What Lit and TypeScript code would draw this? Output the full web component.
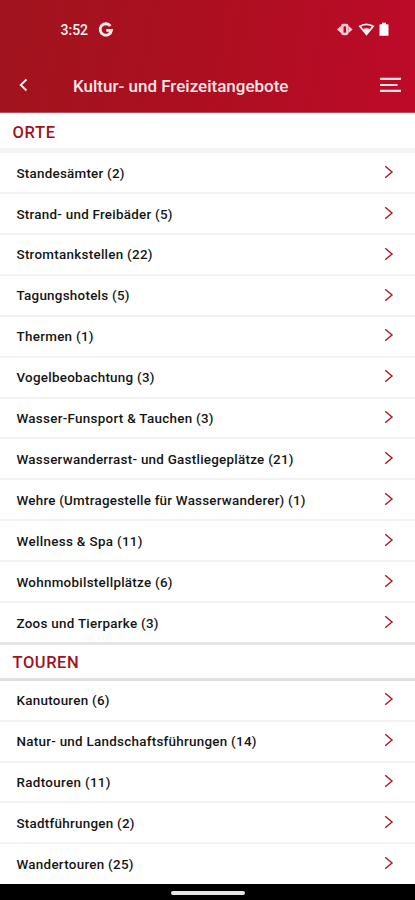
import { LitElement, html, css } from "lit";
import { customElement, property } from "lit/decorators.js";

interface Entry { name: string; count: number; width: number }

const places: Entry[] = [
  { name: "Standesämter", count: 2, width: 108 },
  { name: "Strand- und Freibäder", count: 5, width: 156 },
  { name: "Stromtankstellen", count: 22, width: 136 },
  { name: "Tagungshotels", count: 5, width: 113 },
  { name: "Thermen", count: 1, width: 77 },
  { name: "Vogelbeobachtung", count: 3, width: 138 },
  { name: "Wasser-Funsport & Tauchen", count: 3, width: 197 },
  { name: "Wasserwanderrast- und Gastliegeplätze", count: 21, width: 277 },
  { name: "Wehre (Umtragestelle für Wasserwanderer)", count: 1, width: 289 },
  { name: "Wellness & Spa", count: 11, width: 126 },
  { name: "Wohnmobilstellplätze", count: 6, width: 156 },
  { name: "Zoos und Tierparke", count: 3, width: 142 },
];
const tours: Entry[] = [
  { name: "Kanutouren", count: 6, width: 93 },
  { name: "Natur- und Landschaftsführungen", count: 14, width: 240 },
  { name: "Radtouren", count: 11, width: 94 },
  { name: "Stadtführungen", count: 2, width: 118 },
  { name: "Wandertouren", count: 25, width: 117 },
];

@customElement("list-row")
class ListRow extends LitElement {
  @property() label = "";
  @property({ type: Number }) textWidth = 0;
  static styles = css`
    :host { display: flex; flex: none; box-sizing: border-box; height: 40.9px; align-items: center; justify-content: space-between; padding: 0 21px 0 16px; border-bottom: 2px solid #f2f2f2; background: #fff; }
    :host([last]) { height: 39.4px; border-bottom: 0; }
    svg { display: block; }
    .arrow { margin-bottom: 1.6px; }
    .label { font: 500 13.4px/20px Roboto, sans-serif; fill: #151515; }
  `;
  render() {
    return html`<svg width="310" height="22"><text class="label" x="0.5" y="16.2" textLength=${this.textWidth}>${this.label}</text></svg>
      <svg class="arrow" width="10" height="14" viewBox="0 0 10 14"><path d="M1.2 1.2 8 7 1.2 12.8" fill="none" stroke="#a5202c" stroke-width="1.5"/></svg>`;
  }
}

@customElement("app-root")
class AppRoot extends LitElement {
  static styles = css`
    :host { display: flex; flex-direction: column; height: 900px; overflow: hidden; background: #fff; font-family: Roboto, sans-serif; }
    svg { display: block; }
    .top { height: 113px; box-sizing: border-box; flex: none; background: linear-gradient(100deg, #a0141e 0%, #ad0f20 50%, #bd0a29 100%); color: #fff; border-bottom: 1px solid #b84c58; }
    .status { display: flex; align-items: center; height: 60px; padding: 0 25px 0 60.5px; }
    .time { font: 500 14px/20px Roboto, sans-serif; width: 37.5px; color: #fff0f0; }
    .space { flex: 1; }
    .bar { display: flex; align-items: center; height: 50px; padding: 0 14px 0 18px; }
    .title { flex: 1; margin-left: 45px; padding-top: 1px; font: 500 17px/24px Roboto, sans-serif; color: #fbe6e8; white-space: nowrap; }
    .heading { box-sizing: border-box; flex: none; padding-left: 12.5px; color: #a3131d; font: 500 16.5px/33px Roboto, sans-serif; }
    .first { height: 40.2px; border-bottom: 5px solid #f4f4f4; line-height: 39px; letter-spacing: .65px; }
    .second { height: 38.4px; line-height: 35px; letter-spacing: .55px; border-top: 3px solid #e4e4e4; border-bottom: 3px solid #e0e0e0; }
    .nav { flex: 1; background: #000; display: flex; justify-content: center; align-items: center; }
    .pill { width: 74px; height: 4px; border-radius: 2px; background: #e6e6e6; margin-top: 2px; }
  `;
  list(items: Entry[]) {
    return items.map((e, i) => html`<list-row ?last=${i === items.length - 1} .label=${`${e.name} (${e.count})`} .textWidth=${e.width}></list-row>`);
  }
  render() {
    return html`
      <div class="top">
        <div class="status">
          <span class="time">3:52</span>
          <svg width="16" height="16" viewBox="0 0 16 16"><path d="M12.4 4A5.700 5.700 0 1 0 13.500 8.300H8.300" fill="none" stroke="#fff0f0" stroke-width="2.8"/></svg>
          <span class="space"></span>
          <svg width="53" height="16" viewBox="0 0 53 16" fill="#fff0f0"><g fill="#f8cdd2"><rect x="4" y="1.800" width="7.600" height="11.400" rx="2.400"/><path d="M4 4 0 7.500l4 3.500zM11.600 4 15.600 7.500l-4 3.500z"/></g><rect x="6.500" y="4.300" width="2.600" height="6.400" rx=".8" fill="#b50d25"/><path d="M21.500 4Q29.500-1 37.500 4L29.500 13.800z"/><path d="M24.300 4.500Q29.500 1.800 34.700 4.500L33 7Q29.500 5.300 26 7Z" fill="#b90c27"/><path fill="#fff" d="M42.500 3.200q0-1 1-1h1.500V.8h4v1.400h1.500q1 0 1 1v10.600h-9z"/></svg>
        </div>
        <div class="bar">
          <svg width="10" height="14" viewBox="0 0 10 14"><path d="M8.500 1.500 2.700 7l5.800 5.500" fill="none" stroke="#fff0f0" stroke-width="1.900"/></svg>
          <span class="title">Kultur- und Freizeitangebote</span>
          <svg width="22" height="16" viewBox="0 0 22 16" fill="#fbdfe2"><path d="M1 .8h21V3H1zM1 7h17.500v2H1zM1 12.800h21V15H1z"/></svg>
        </div>
      </div>
      <div class="heading first">ORTE</div>
      ${this.list(places)}
      <div class="heading second">TOUREN</div>
      ${this.list(tours)}
      <div class="nav"><div class="pill"></div></div>`;
  }
}
